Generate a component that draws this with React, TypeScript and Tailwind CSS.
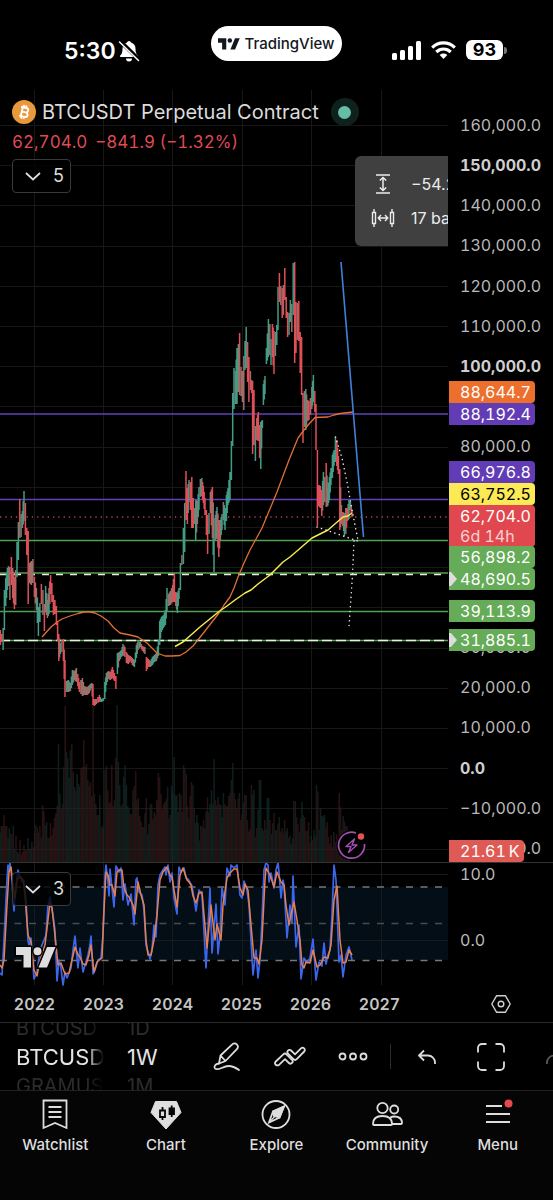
/**
 * Mobile chart screen - BTCUSDT perpetual, weekly bars with a stochastic pane
 */

import React from 'react';
import { clsx } from 'clsx';

type Tone = 'u' | 'd' | 'm';
type Bar = [x: number, top: number, bottom: number, tone: Tone];

// weekly ranges: x, high, low, up / down / mixed
const CANDLES: Bar[] = [
  [0, 630, 645, 'd'], [1.5, 634, 642, 'd'], [2.7, 628, 650, 'u'], [4, 590, 630, 'u'], [5.3, 578, 606, 'u'],
  [7, 568, 590, 'u'], [8, 566, 586, 'm'], [9.5, 567, 600, 'm'], [11, 557, 585, 'd'], [12.3, 568, 598, 'm'],
  [14, 577, 609, 'd'], [15.3, 570, 605, 'm'], [16.6, 542, 577, 'u'], [18, 522, 560, 'u'], [19.4, 499, 538, 'd'],
  [20.7, 514, 537, 'u'], [22, 511, 528, 'm'], [23.6, 491, 521, 'u'], [25, 503, 535, 'd'], [26.4, 528, 555, 'd'],
  [27.8, 531, 604, 'd'], [29.2, 563, 583, 'm'], [31, 561, 585, 'm'], [32.5, 559, 583, 'm'], [34, 577, 597, 'd'],
  [36, 588, 610, 'm'], [38, 607, 636, 'u'], [39.5, 603, 622, 'u'], [41, 584, 604, 'd'], [42.5, 590, 615, 'm'],
  [44, 604, 631, 'd'], [45.2, 586, 612, 'u'], [47, 600, 618, 'm'], [48.6, 588, 614, 'u'], [50.2, 575, 594, 'd'],
  [51.5, 583, 602, 'd'], [53, 595, 615, 'd'], [54.5, 600, 614, 'd'], [56, 606, 625, 'd'], [57.2, 622, 641, 'd'],
  [58.4, 634, 661, 'd'], [60, 643, 654, 'u'], [61.5, 640, 652, 'm'], [63, 639, 661, 'd'], [64.6, 660, 697, 'd'],
  [66, 681, 692, 'm'], [68, 680, 692, 'u'], [70, 683, 691, 'm'], [72, 670, 685, 'u'], [74, 671, 680, 'm'],
  [76, 668, 682, 'm'], [77.4, 674, 686, 'd'], [79, 682, 692, 'd'], [82, 678, 696, 'm'], [84, 686, 695, 'm'],
  [87, 687, 695, 'm'], [89, 685, 693, 'm'], [91, 683, 688, 'u'], [92.6, 684, 705, 'd'], [94, 699, 706, 'd'],
  [96, 699, 704, 'm'], [99, 695, 702, 'd'], [101, 699, 702, 'u'], [103, 698, 701, 'u'], [104.4, 682, 699, 'u'],
  [106, 673, 685, 'u'], [108, 671, 679, 'm'], [110, 672, 680, 'm'], [112, 667, 678, 'd'], [114, 673, 681, 'd'],
  [115.5, 676, 689, 'd'], [117, 653, 674, 'u'], [119, 652, 661, 'm'], [121, 650, 657, 'u'], [122.6, 644, 655, 'u'],
  [124.5, 647, 657, 'd'], [126, 652, 663, 'm'], [128, 655, 664, 'd'], [130, 656, 661, 'm'], [132, 658, 665, 'd'],
  [134, 660, 667, 'u'], [136, 645, 658, 'u'], [137.6, 641, 650, 'm'], [140, 642, 647, 'u'], [142, 646, 651, 'd'],
  [144.5, 647, 654, 'm'], [146, 657, 671, 'd'], [148, 659, 667, 'd'], [150, 661, 667, 'm'], [152, 657, 665, 'u'],
  [154, 655, 662, 'u'], [156, 653, 661, 'm'], [158, 640, 656, 'u'], [159.3, 621, 645, 'u'], [161, 617, 632, 'u'],
  [163, 615, 628, 'u'], [165, 610, 625, 'u'], [166.6, 588, 612, 'u'], [168, 594, 606, 'm'], [170, 591, 605, 'm'],
  [172.3, 585, 602, 'm'], [174, 573, 602, 'd'], [175.4, 592, 606, 'd'], [177, 593, 613, 'u'], [178.6, 588, 599, 'u'],
  [180, 563, 590, 'u'], [181.5, 555, 565, 'm'], [183, 528, 564, 'u'], [184.3, 503, 552, 'u'], [185.6, 471, 520, 'd'],
  [187, 488, 524, 'd'], [188.6, 480, 502, 'u'], [190, 482, 510, 'd'], [191.4, 477, 528, 'd'], [192.8, 498, 528, 'd'],
  [194.2, 508, 524, 'm'], [195.3, 500, 541, 'u'], [197, 501, 524, 'm'], [198.6, 487, 510, 'u'], [200, 479, 497, 'm'],
  [201.4, 478, 496, 'u'], [203, 486, 503, 'd'], [204.6, 498, 515, 'd'], [206, 510, 535, 'd'], [207.2, 515, 554, 'd'],
  [208.6, 513, 534, 'u'], [210, 492, 513, 'u'], [212, 487, 538, 'd'], [213.6, 518, 572, 'u'], [215, 515, 540, 'm'],
  [216.6, 507, 538, 'u'], [218.4, 520, 557, 'd'], [220, 520, 540, 'm'], [221.6, 514, 530, 'u'], [223, 502, 520, 'm'],
  [224.6, 508, 530, 'u'], [226, 495, 521, 'u'], [227.6, 488, 505, 'u'], [229.6, 472, 500, 'u'], [231, 441, 480, 'u'],
  [232.3, 393, 446, 'u'], [233.6, 368, 409, 'u'], [235, 371, 404, 'm'], [236.6, 348, 404, 'u'], [238, 344, 392, 'u'],
  [239.2, 333, 395, 'd'], [240.6, 367, 396, 'm'], [242, 371, 402, 'm'], [243.4, 356, 410, 'm'], [244.6, 341, 370, 'u'],
  [245.8, 327, 368, 'u'], [247.2, 342, 382, 'd'], [248.5, 357, 402, 'd'], [250, 371, 390, 'm'], [251.2, 380, 393, 'd'],
  [252.2, 381, 454, 'd'], [253.6, 390, 445, 'd'], [255, 426, 461, 'u'], [256.4, 418, 440, 'm'], [258, 412, 441, 'd'],
  [259.2, 425, 458, 'd'], [260.4, 422, 469, 'u'], [262, 420, 428, 'u'], [263, 384, 405, 'u'], [264.6, 376, 394, 'u'],
  [266, 348, 364, 'u'], [268, 319, 357, 'u'], [269.4, 324, 355, 'm'], [270.6, 339, 365, 'u'], [272, 324, 357, 'd'],
  [273.6, 331, 374, 'd'], [275, 332, 356, 'u'], [276.4, 325, 345, 'u'], [277.6, 287, 330, 'u'], [279, 273, 302, 'd'],
  [280.4, 286, 305, 'm'], [281.8, 288, 318, 'd'], [283, 285, 315, 'm'], [284.4, 268, 300, 'd'], [285.8, 297, 318, 'd'],
  [287.2, 312, 337, 'd'], [288.6, 313, 335, 'u'], [290, 300, 322, 'u'], [291.4, 304, 332, 'm'], [292.8, 263, 315, 'u'],
  [294.3, 262, 363, 'd'], [295.6, 302, 353, 'd'], [297, 303, 340, 'm'], [298.4, 301, 341, 'd'], [299.8, 332, 373, 'd'],
  [301.2, 337, 395, 'd'], [302.6, 393, 443, 'd'], [304, 391, 427, 'm'], [305.4, 389, 430, 'u'], [307, 400, 421, 'm'],
  [308.6, 401, 420, 'd'], [310, 398, 415, 'm'], [311.4, 387, 409, 'm'], [313, 375, 402, 'u'], [314.4, 391, 412, 'd'],
  [315.6, 404, 450, 'd'], [317, 450, 526, 'd'], [318.4, 485, 506, 'd'], [320, 486, 508, 'd'], [321.4, 490, 516, 'd'],
  [323, 472, 505, 'u'], [324.4, 477, 502, 'm'], [325.8, 463, 507, 'd'], [327.4, 488, 506, 'u'], [329, 477, 500, 'u'],
  [330.6, 468, 485, 'u'], [332, 455, 478, 'u'], [333.6, 450, 466, 'u'], [335, 437, 462, 'u'], [336.4, 440, 466, 'd'],
  [338, 456, 474, 'd'], [339.4, 469, 530, 'd'], [341, 505, 524, 'm'], [342.4, 512, 526, 'd'], [344, 513, 536, 'u'],
  [345.4, 508, 534, 'm'], [347, 508, 521, 'd'], [348.6, 500, 519, 'u'], [350, 502, 510, 'u'], [351.6, 510, 517, 'd'],
];

const VOLUME: [number, number][] = [
  [0, 832], [2, 826], [4, 815], [6, 826], [9, 828], [13, 826], [16, 836], [20, 840], [24, 845], [28, 838], [32, 842],
  [36, 825], [40, 826], [43, 805], [46, 822], [50, 823], [54, 818], [57, 806], [58.5, 744], [60, 794], [62, 804],
  [64.6, 706], [66, 752], [68, 758], [70, 750], [71.6, 744], [73, 772], [75, 787], [77, 774], [79, 784], [82, 767],
  [84, 740], [86, 764], [88, 780], [90, 782], [91.5, 796], [92.7, 704], [94, 794], [96, 804], [98, 815], [99.4, 795],
  [101, 828], [103, 826], [104.6, 770], [106, 766], [108, 790], [110, 802], [111.6, 765], [114, 800], [115.4, 758],
  [116.7, 705], [118, 762], [120, 785], [122, 804], [124.6, 765], [126, 785], [128, 806], [131, 814], [133, 790],
  [135.6, 771], [138, 798], [140, 816], [143, 827], [146, 798], [149, 824], [151, 804], [154, 812], [157, 800],
  [158.6, 773], [161, 794], [165, 802], [167, 787], [170, 815], [172, 786], [173.8, 757], [176, 795], [178.6, 812],
  [180, 793], [182, 812], [184, 765], [186, 774], [188, 806], [191, 782], [192.8, 785], [194.5, 808], [197, 815],
  [201, 826], [204, 820], [207, 797], [210, 804], [212, 790], [213.7, 759], [215, 800], [218, 797], [221, 805],
  [224, 793], [227, 806], [229, 796], [231, 780], [232.4, 763], [234, 793], [237, 808], [239, 793], [241, 820],
  [243, 803], [245.4, 795], [248, 820], [250, 829], [252, 785], [254, 790], [256.6, 828], [258, 810], [260, 780],
  [262, 828], [265, 820], [268, 798], [270, 820], [273.6, 813], [276, 830], [279, 817], [282, 828], [284.5, 820],
  [287, 828], [290, 836], [292, 838], [294.6, 801], [296, 817], [298, 824], [300.6, 818], [302.4, 802], [305, 817],
  [308, 822], [311, 836], [314, 830], [317, 785], [319, 830], [321, 808], [324, 815], [327, 822], [331, 835],
  [334, 832], [337, 834], [339.5, 793], [341.5, 830], [343.6, 816], [346, 826], [349, 840],
];

const STOCH_K =
  '0,973 2,975 4,940 7,880 8,865 9,872 10,863 12,880 14,911 16,885 18,870 20,878 22,882 24,880 26,900 28,941 29,945 31,938 34,979 37,972 40,950 46,935 48,905 50,897 53,915 55,930 57,981 59,960 61,968 63,985 65,972 67,978 71,968 73,950 75,936 78,968 80,948 83,972 85,965 88,955 90,945 91,936 93,974 95,970 98,960 101,958 103,935 105,876 106,865 108,882 109,896 110,869 114,907 116,866 119,872 121,868 123,900 125,884 128,905 131,894 134,925 136,880 137,878 139,892 142,895 144,910 146,945 149,955 150,959 152,950 154,925 156,937 158,885 160,875 163,870 165,867 166,875 168,865 170,882 172,873 174,898 177,914 179,867 181,872 184,868 186,878 188,879 192,886 196,911 199,890 202,895 206,968 210,888 212,953 216,904 218,954 220,935 222,888 225,905 227,868 230,876 231,865 234,868 237,865 240,895 242,898 244,881 247,890 249,905 251,940 253,975 256,950 258,978 260,960 262,920 264,870 266,863 268,865 269,882 271,873 274,888 276,870 278,863 279,872 281,898 283,880 284,885 287,938 290,905 292,923 293,876 296,947 299,925 301,979 304,958 307,963 310,958 313,939 316,980 319,962 322,966 324,943 326,964 328,955 330,950 332,915 334,865 336,880 339,962 341,955 343,977 346,955 349,947 352,960';
const STOCH_D =
  '0,965 2,968 4,960 7,905 9,872 11,867 13,885 15,898 17,880 20,876 23,880 25,895 28,935 31,942 34,970 37,976 40,960 45,945 50,903 52,908 56,945 58,965 61,963 65,974 69,973 72,960 75,947 78,955 80,957 83,964 86,965 89,955 91,945 94,972 97,962 102,958 104,910 106,872 108,875 110,885 112,885 115,896 117,872 119,870 122,870 124,888 127,895 129,897 133,905 135,914 138,882 141,895 144,905 146,940 148,955 151,955 154,940 157,915 160,880 163,872 167,867 170,875 172,877 174,890 177,907 180,875 183,868 187,880 189,882 191,885 193,896 196,903 199,893 202,892 207,948 211,905 215,940 217,924 221,940 223,905 227,878 230,873 234,869 237,869 240,888 243,895 245,884 248,890 251,925 254,958 257,958 259,964 262,940 265,880 266,868 270,875 274,887 277,872 281,882 284,885 286,905 289,925 291,915 294,902 297,920 300,940 302,965 304,968 306,962 310,963 313,950 317,967 320,965 324,957 328,958 331,945 334,900 337,886 340,940 343,963 346,962 349,950 352,955';

const MA_SLOW =
  '42,637 51,627 57,622 62,619 70,616 78,613.5 84,612 90,612 95,613 101,616 108,621 114,628 120,633 130,635 138,637 147,643 157,653 165,656 172,656 180,655.5 186,652 193,646 205,631 219,613 224,605 230,597 234,588 238,577 244,563 250,550 256,539 262,528 277,492 289,460 298,438 304,430 309,424 315,417.5 328,417 334,415 340,413.5 353,412';
const MA_FAST =
  '175,646.5 183,642 200,627 219,611.5 227,606 235,600 245,593 251,590 258,584 270,575 283,562 290,557 297,551 312,538 320,534 328,530 336,523 343,517 348,516 352,513';

const GRID_X = [34.5, 103.5, 172.5, 242.5, 311.5, 381.5];
const STEP = 1.33;

const AXIS = Array.from({ length: 19 }, (_, i) => 160000 - i * 10000);
const BOLD = [150000, 100000, 0];
// scale labels that give way to the price tags
const COVERED = [90000, 70000, 60000, 50000, 40000];

const TAGS = [
  { text: '88,644.7', top: 291, tone: 'bg-[#ec6f2d] text-white' },
  { text: '88,192.4', top: 313, tone: 'bg-[#623cb4] text-white' },
  { text: '66,976.8', top: 371, tone: 'bg-[#623cb4] text-white' },
  { text: '63,752.5', top: 393, tone: 'bg-[#fbe956] text-black' },
  { text: '62,704.0', note: '6d 14h', top: 415, tone: 'bg-[#e0474e] text-white' },
  { text: '56,898.2', top: 456, tone: 'bg-[#65ab58] text-white' },
  { text: '48,690.5', top: 478, tone: 'bg-[#65ab58] text-white', arrow: true },
  { text: '39,113.9', top: 510, tone: 'bg-[#65ab58] text-white' },
  { text: '31,885.1', top: 539, tone: 'bg-[#65ab58] text-white', arrow: true },
];

const YEARS = ['2022', '2023', '2024', '2025', '2026', '2027'];

const nearest = <T extends [number, ...unknown[]]>(list: T[], x: number) =>
  list.reduce((best, item) => (Math.abs(item[0] - x) < Math.abs(best[0] - x) ? item : best));

const rand = (i: number) => {
  const v = Math.sin(i * 12.9898) * 43758.5453;
  return v - Math.floor(v);
};

// close the gaps between sparse weeks so the bars stand shoulder to shoulder
const BARS = CANDLES.flatMap((bar, i): Bar[] => {
  const next = CANDLES[i + 1];
  if (!next || next[0] - bar[0] < 1.55) return [bar];
  return [bar, [(bar[0] + next[0]) / 2, (bar[1] + next[1]) / 2, (bar[2] + next[2]) / 2, next[3]]];
});

function candlePath(tone: Tone) {
  return BARS.filter((c) => c[3] === tone)
    .map(([x, top, bottom]) => `M${x + 0.4} ${top}V${bottom}`)
    .join('');
}

function volumePath(up: boolean) {
  let d = '';
  for (let i = 0; i * STEP < 350; i++) {
    const x = i * STEP;
    const key = nearest(VOLUME, x);
    const away = Math.abs(key[0] - x);
    // lone spikes stay one bar wide
    const top = away < 0.7 ? key[1] : Math.max(key[1], 765) + rand(i) * 16;
    if (rand(i + 500) > 0.5 === up) d += `M${x.toFixed(1)} ${top.toFixed(1)}V862`;
  }
  return d;
}

function PriceChart() {
  return (
    <svg className="absolute inset-0 h-full w-full" viewBox="0 90 448 772" preserveAspectRatio="xMinYMin slice" fill="none" aria-hidden="true">
      <g stroke="#171717">
        {GRID_X.map((x) => (
          <path key={x} d={`M${x} 90V862`} />
        ))}
        {AXIS.map((p, i) => (
          <path key={p} d={`M0 ${Math.round(125 + i * 40.2) + 0.5}H448`} />
        ))}
      </g>
      <g strokeWidth="1.6" opacity="0.7">
        <path d={volumePath(true)} stroke="#142b28" />
        <path d={volumePath(false)} stroke="#371a1b" />
      </g>
      <path d="M0 414H448M0 499.5H448" stroke="#5f42b8" strokeWidth="1.4" />
      <path d="M0 540.5H448M0 573H448M0 611.5H448M0 640.5H448" stroke="#55a04c" strokeWidth="1.3" />
      <path d="M0 574.5H448" stroke="#e4efdc" strokeWidth="1.6" strokeDasharray="7 7" />
      <path d="M0 640.5H448" stroke="#e4efdc" strokeWidth="1.4" strokeDasharray="10 4" />
      <path d="M0 517H448" stroke="#b5484c" strokeWidth="1.3" strokeDasharray="1.3 4" />
      <g strokeWidth="1.5">
        <path d={candlePath('m')} stroke="#9d6f69" />
        <path d={candlePath('u')} stroke="#429c86" />
        <path d={candlePath('d')} stroke="#e04f58" />
      </g>
      <polyline points={MA_SLOW} stroke="#df7033" strokeWidth="1.3" strokeLinejoin="round" />
      <polyline points={MA_FAST} stroke="#f5e94f" strokeWidth="1.5" strokeLinejoin="round" />
      <path d="M341 262L363.5 537" stroke="#3f82dc" strokeWidth="1.6" />
      <path
        d="M335.5 437L342 458L347 482L352 510L358 540M317 527L358 541M354 541L352.5 575L349 627"
        stroke="#e8e8e8"
        strokeWidth="1.5"
        strokeLinecap="round"
        strokeDasharray="0.1 4.6"
      />
      <g>
        <circle cx="351.5" cy="845.5" r="15" fill="#000" />
        <path d="M356 833a13 13 0 1 0 8.5 11" stroke="#a24fb5" strokeWidth="1.7" />
        <path d="M354.5 839L346 846.5H351L348.5 852.5L357 845H352Z" stroke="#a24fb5" strokeWidth="1.4" strokeLinejoin="round" />
        <circle cx="361" cy="836.5" r="3.2" fill="#e5534f" />
      </g>
    </svg>
  );
}

function StochChart() {
  return (
    <svg className="absolute inset-0 h-full w-full" viewBox="0 863 448 123" preserveAspectRatio="xMinYMin slice" fill="none" aria-hidden="true">
      <rect y="887" width="448" height="73" fill="#040e16" />
      <g stroke="#171b1e">
        {GRID_X.map((x) => (
          <path key={x} d={`M${x} 863V985`} />
        ))}
        <path d="M0 874.5H448M0 940.5H448" />
      </g>
      <path d="M0 887H448M0 960.5H448" stroke="#74787b" strokeWidth="1.3" strokeDasharray="7 7.5" />
      <path d="M0 923.5H448" stroke="#464b4f" strokeWidth="1.3" strokeDasharray="7 7.5" />
      <polyline points={STOCH_K} stroke="#3c66ee" strokeWidth="1.7" strokeLinejoin="round" />
      <polyline points={STOCH_D} stroke="#e87f4c" strokeWidth="1.5" strokeLinejoin="round" />
    </svg>
  );
}

function TvMark({ className, halo }: { className?: string; halo?: boolean }) {
  return (
    <svg
      className={className}
      viewBox="0 0 40 21"
      fill="currentColor"
      stroke={halo ? '#000' : 'none'}
      strokeWidth={halo ? 3 : 0}
      paintOrder="stroke"
      overflow="visible"
      aria-hidden="true"
    >
      <path d="M0 0H15V20.5H7.5V8H0Z" />
      <circle cx="21.5" cy="4.2" r="4" />
      <path d="M31 0H39.5L31 20.5H22.5Z" />
    </svg>
  );
}

function StatusBar() {
  return (
    <header className="grid h-[90px] grid-cols-3 text-white">
      <div className="flex items-center gap-[2px] pt-3 pl-16">
        <span className="text-[23px] leading-7 font-semibold">5:30</span>
        <svg className="size-[22px] shrink-0" viewBox="0 0 22 22" fill="currentColor" aria-hidden="true">
          <path d="M11 1a2 2 0 0 1 2 1.5c3 .8 4.500 3.300 4.500 6.200 0 4 .8 5.300 2.300 6.800.5.600.2 1.500-.6 1.500H2.800c-.8 0-1.100-.9-.6-1.500 1.500-1.500 2.300-2.800 2.300-6.800C4.500 5.800 6 3.300 9 2.500A2 2 0 0 1 11 1ZM8 18.500h6a3 3 0 0 1-6 0Z" />
          <path d="M2.500 1.500L21 19.500" stroke="#000" strokeWidth="4" />
          <path d="M1.500 2L20.500 20.500" stroke="currentColor" strokeWidth="1.500" strokeLinecap="round" />
        </svg>
      </div>
      <div className="flex justify-center pt-[26px]">
        <div className="flex h-[35px] w-[131px] shrink-0 items-center justify-center gap-1 rounded-full bg-white text-[#131722]">
          <TvMark className="h-[12px] w-[22px]" />
          <span className="text-[15px] leading-5 font-medium">TradingView</span>
        </div>
      </div>
      <div className="flex items-center justify-end gap-[10px] pt-[10px] pr-[46px]">
        <svg className="h-[19px] w-[29px]" viewBox="0 0 29 19" fill="currentColor" aria-hidden="true">
          <rect y="12" width="5" height="7" rx="1.5" />
          <rect x="8" y="9" width="5" height="10" rx="1.5" />
          <rect x="16" y="5" width="5" height="14" rx="1.5" />
          <rect x="24" width="5" height="19" rx="1.5" />
        </svg>
        <svg className="h-[18px] w-[25px]" viewBox="0 0 25 18" fill="none" stroke="currentColor" strokeWidth="3.2" aria-hidden="true">
          <path d="M1.2 6.6a16 16 0 0 1 22.6 0" />
          <path d="M5.3 11a10.2 10.2 0 0 1 14.4 0" />
          <path d="M8.7 14a5.6 5.6 0 0 1 7.6 0L12.5 18Z" fill="currentColor" stroke="none" />
        </svg>
        <div className="flex items-center gap-px">
          <span className="flex h-[20px] w-[37px] items-center justify-center rounded-md bg-white text-[18px] leading-5 font-bold text-black">
            93
          </span>
          <span className="h-[7px] w-[3px] rounded-r-full bg-[#777]" />
        </div>
      </div>
    </header>
  );
}

function CollapseButton({ count, label }: { count: number; label: string }) {
  return (
    <button
      type="button"
      aria-label={label}
      className="flex h-[34px] w-[59px] items-center justify-between rounded border border-[#3a3a3a] bg-black/80 pr-[6px] pl-3 text-[18px] leading-6 text-[#dcdcdc]"
    >
      <svg className="h-[9px] w-[16px]" viewBox="0 0 16 9" fill="none" stroke="currentColor" strokeWidth="1.8" aria-hidden="true">
        <path d="M1 1L8 7.5L15 1" />
      </svg>
      {count}
    </button>
  );
}

function PricePane() {
  return (
    <section className="flex h-[772px]">
      <div className="relative min-w-0 flex-1 overflow-hidden">
        <PriceChart />
        <div className="relative pt-[8px] pl-3">
          <div className="flex h-7 items-center gap-[6px]">
            <svg className="size-[24px] shrink-0" viewBox="0 0 24 24" aria-hidden="true">
              <circle cx="12" cy="12" r="12" fill="#ea983c" />
              <g transform="rotate(13 12 12)" fill="none" stroke="#fff" strokeWidth="1.9">
                <path d="M8 7.5H13.5a2.2 2.2 0 0 1 0 4.5H9.5M13.8 12a2.3 2.3 0 0 1 0 4.7H8M9.8 7.5V16.7M10.5 5V7.5M13 5V7.5M10.5 16.7V19M13 16.7V19" />
              </g>
            </svg>
            <h1 className="text-[20px] leading-7 whitespace-nowrap text-[#dbdbdb]">BTCUSDT Perpetual Contract</h1>
            <span className="ml-[6px] flex size-[28px] shrink-0 items-center justify-center rounded-full bg-[#0e211d]">
              <span className="size-[13px] rounded-full bg-[#64bda7]" />
            </span>
          </div>
          <p className="mt-[6px] flex gap-2 text-[17px] leading-5 text-[#df4a54] tabular-nums">
            <span>62,704.0</span>
            <span>−841.9 (−1.32%)</span>
          </p>
          <div className="mt-[7px]">
            <CollapseButton count={5} label="Show 5 indicators" />
          </div>
        </div>
        <div className="absolute top-[66px] left-[355px] flex h-[90px] w-[150px] flex-col justify-center gap-[10px] rounded-md bg-[#404040] pl-4 text-[16px] leading-6 whitespace-nowrap text-[#ececec]">
          <div className="flex items-center gap-4">
            <svg className="size-[24px]" viewBox="0 0 24 24" fill="none" stroke="currentColor" strokeWidth="1.5" aria-hidden="true">
              <path d="M5 3H19M5 21H19M12 5.5V18.5M8.8 8.5L12 5.5L15.2 8.5M8.8 15.5L12 18.5L15.2 15.5" />
            </svg>
            −54.25%
          </div>
          <div className="flex items-center gap-4">
            <svg className="size-[24px]" viewBox="0 0 24 24" fill="none" stroke="currentColor" strokeWidth="1.4" aria-hidden="true">
              <path d="M1.5 6.5H4.5V17.5H1.5ZM3 3V6.5M3 17.5V21M19.5 6.5H22.5V17.5H19.5ZM21 3V6.5M21 17.5V21M7.5 12H16.5M10 9L7.2 12L10 15M14 9L16.8 12L14 15" />
            </svg>
            17 bars
          </div>
        </div>
      </div>
      <div className="relative w-[105px] shrink-0 text-[16px] leading-5 tabular-nums">
        <ul className="flex h-[768px] flex-col justify-between pt-[25px] pl-3 text-[#b9b9b9]">
          {AXIS.map((price) => (
            <li
              key={price}
              className={clsx(BOLD.includes(price) && 'font-bold text-[#cfcfcf]', COVERED.includes(price) && 'invisible')}
            >
              {price < 0 && '−'}
              {Math.abs(price).toLocaleString('en-US', { minimumFractionDigits: 1 })}
            </li>
          ))}
        </ul>
        {TAGS.map((tag) => (
          <div
            key={tag.text}
            className={clsx('absolute left-px w-[86px] rounded-r-sm py-px pl-[11px]', tag.tone)}
            style={{ top: tag.top }}
          >
            {tag.arrow && (
              <svg className="absolute top-1 left-0 h-[14px] w-[8px]" viewBox="0 0 8 14" fill="#dcdcdc" aria-hidden="true">
                <path d="M0 0H2L8 7L2 14H0Z" />
              </svg>
            )}
            {tag.text}
            {tag.note && <span className="block text-white/75">{tag.note}</span>}
          </div>
        ))}
        <div className="absolute bottom-0 left-px w-[75px] rounded-r-sm bg-[#e05a55] py-px pl-[11px] text-white">
          21.61{'\u2009'}K
        </div>
      </div>
    </section>
  );
}

function StochPane() {
  return (
    <section className="flex h-[124px] border-t border-[#333]">
      <div className="relative min-w-0 flex-1 overflow-hidden">
        <StochChart />
        <div className="relative flex h-full flex-col justify-between pt-[9px] pb-[18px] pl-3">
          <CollapseButton count={3} label="Show 3 indicators" />
          <TvMark className="ml-1 h-[21px] w-[40px] text-[#dedede]" halo />
        </div>
      </div>
      <div className="flex w-[105px] shrink-0 flex-col gap-[46px] pt-px pl-3 text-[16px] leading-5 text-[#b9b9b9] tabular-nums">
        <span>10.0</span>
        <span>0.0</span>
      </div>
    </section>
  );
}

function TimeAxis() {
  return (
    <div className="flex h-[36px] items-center">
      <ol className="grid min-w-0 flex-1 grid-cols-[repeat(6,69px)] text-center text-[16px] leading-5 font-semibold text-[#c4c4c4] tabular-nums">
        {YEARS.map((year) => (
          <li key={year}>{year}</li>
        ))}
      </ol>
      <button type="button" aria-label="Chart settings" className="flex w-[105px] shrink-0 justify-center text-[#d0d0d0]">
        <svg className="size-[20px]" viewBox="0 0 20 20" fill="none" stroke="currentColor" strokeWidth="1.4" aria-hidden="true">
          <path d="M5.5 1.8H14.5L19.2 10L14.5 18.2H5.5L.8 10Z" strokeLinejoin="round" />
          <circle cx="10" cy="10" r="2.8" />
        </svg>
      </button>
    </div>
  );
}

function Wheel({ items, label, fade }: { items: string[]; label: string; fade?: boolean }) {
  return (
    <button
      type="button"
      aria-label={label}
      className={clsx(
        'flex h-full shrink-0 flex-col items-start justify-center overflow-hidden text-[#2c2c2c]',
        fade ? 'w-[88px] [mask-image:linear-gradient(to_right,#000_80%,transparent)]' : 'w-[34px]',
      )}
    >
      <span className="text-[20px] leading-6">{items[0]}</span>
      <span className="my-[3px] text-[22px] leading-7 text-[#e4e4e4]">{items[1]}</span>
      <span className="text-[20px] leading-6">{items[2]}</span>
    </button>
  );
}

function ToolIcon({ label, className, children }: { label: string; className: string; children: React.ReactNode }) {
  return (
    <button type="button" aria-label={label} className={clsx('shrink-0 text-[#dcdcdc]', className)}>
      <svg className="size-[32px]" viewBox="0 0 32 32" fill="none" stroke="currentColor" strokeWidth="1.8" strokeLinejoin="round" aria-hidden="true">
        {children}
      </svg>
    </button>
  );
}

function Toolbar() {
  return (
    <div className="flex h-[68px] items-center overflow-hidden border-t border-[#2a2a2a] pl-4">
      <Wheel items={['BTCUSD', 'BTCUSD', 'GRAMUSD']} label="Symbol" fade />
      <div className="ml-[23px] h-full">
        <Wheel items={['1D', '1W', '1M']} label="Interval" />
      </div>
      <ToolIcon label="Draw" className="ml-[51px]">
        <path d="M8.5 14.5L20.5 3.2a2.8 2.8 0 0 1 4 0l.6.6a2.8 2.8 0 0 1 0 4L13.5 20L7 22.5ZM8.5 14.5L13.5 20" />
        <path d="M7 22.5c-4 .5-5.5 3-4 5 2.5 3 8-2.5 13.5-2.5 4 0 7 1.5 10.5 4" strokeLinecap="round" />
      </ToolIcon>
      <ToolIcon label="Indicators" className="ml-[30px]">
        <path d="M1.8 20.5L9.300 13.300a2.300 2.300 0 0 1 3.200 0L18 18.800a2.200 2.200 0 0 1-3.100 3.200L11 18.200L5 23.800a2.200 2.200 0 0 1-3.200-3.300Z" />
        <path d="M30.200 10.500L22.700 18.200a2.300 2.300 0 0 1-3.200 0L14 12.700a2.200 2.200 0 0 1 3.100-3.200L21 13.300L27 7.400a2.200 2.200 0 0 1 3.200 3.100Z" />
      </ToolIcon>
      <ToolIcon label="More tools" className="ml-[31px]">
        <circle cx="5.5" cy="15.5" r="3" />
        <circle cx="16" cy="15.5" r="3" />
        <circle cx="26.5" cy="15.5" r="3" />
      </ToolIcon>
      <span className="ml-[21px] h-[25px] w-px shrink-0 bg-[#2c2c2c]" />
      <ToolIcon label="Undo" className="ml-[20px]">
        <path d="M13 9.500L8 14.500L13 19.500M8 14.500H17a7 7 0 0 1 7 7V23" />
      </ToolIcon>
      <ToolIcon label="Full screen" className="ml-[32px]">
        <path d="M3 11.500V7a4 4 0 0 1 4-4H11.500M20.500 3H25a4 4 0 0 1 4 4V11.500M29 20.500V25a4 4 0 0 1-4 4H20.500M11.500 29H7a4 4 0 0 1-4-4V20.500" />
      </ToolIcon>
      <ToolIcon label="Redo" className="ml-[32px] opacity-40">
        <path d="M19 9.500L24 14.500L19 19.500M24 14.500H15a7 7 0 0 0-7 7V23" />
      </ToolIcon>
    </div>
  );
}

const NAV = [
  {
    label: 'Watchlist',
    icon: (
      <path d="M4.5 1.5H27.5V29L16 24L4.5 29ZM9.5 8H22.5M9.5 13H22.5M9.5 18H22.5" />
    ),
  },
  {
    label: 'Chart',
    icon: (
      <>
        <path d="M5.5 2.5H26.5L31 13.5L16 30L1 13.5Z" fill="currentColor" stroke="currentColor" strokeWidth="1" />
        <path d="M10 11.5H15V18H10ZM12.5 8V11.5M12.5 18V21" stroke="#050505" />
        <path d="M19.5 9.500H24V15H19.500ZM21.700 6.500V18" fill="#050505" stroke="#050505" />
      </>
    ),
  },
  {
    label: 'Explore',
    icon: (
      <>
        <circle cx="16" cy="15.5" r="13.5" />
        <path d="M24 7.500L19.500 18.500L9 23.500L13 12.500Z" />
        <path d="M24 7.500L19.500 18.500L14 17L13 12.500Z" fill="currentColor" />
        <path d="M9 23.500L16 16" strokeWidth="1.200" />
      </>
    ),
  },
  {
    label: 'Community',
    icon: (
      <>
        <circle cx="11.5" cy="9" r="5.2" />
        <circle cx="23.2" cy="10.5" r="4" />
        <path d="M2 25c0-5.500 3-8 9.500-8s9.500 2.500 9.500 8c0 .6-.4 1-1 1H3c-.6 0-1-.4-1-1ZM19.500 18.500c1-.8 2.200-1 3.500-1 5 0 8 2.500 8 6.500 0 .6-.4 1-1 1H21" />
      </>
    ),
  },
  {
    label: 'Menu',
    icon: (
      <>
        <path d="M4 7H20M4 15H28M4 23H28" />
        <circle cx="26.5" cy="4.5" r="4" fill="#e5484d" stroke="none" />
      </>
    ),
  },
];

function TabBar() {
  return (
    <nav className="grid h-[110px] grid-cols-5 border-t border-[#222] bg-[#050505]">
      {NAV.map((item) => (
        <a key={item.label} href="#" className="flex flex-col items-center pt-[8px] text-[15px] leading-5 font-medium text-[#dedede]">
          <svg className="mb-1 size-[32px]" viewBox="0 0 32 32" fill="none" stroke="currentColor" strokeWidth="1.8" aria-hidden="true">
            {item.icon}
          </svg>
          {item.label}
        </a>
      ))}
    </nav>
  );
}

export default function App() {
  return (
    <main className="bg-black font-['Inter',sans-serif]">
      <StatusBar />
      <PricePane />
      <StochPane />
      <TimeAxis />
      <Toolbar />
      <TabBar />
    </main>
  );
}
